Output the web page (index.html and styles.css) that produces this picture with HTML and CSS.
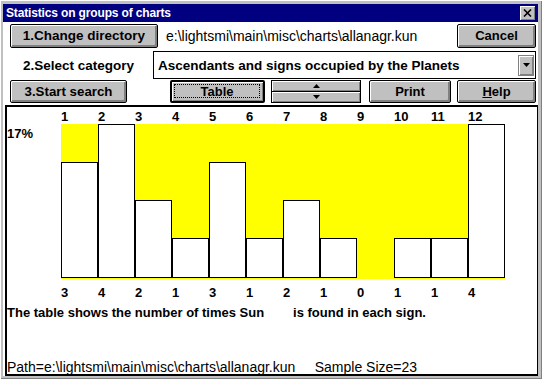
FILE: index.html
```html
<!DOCTYPE html>
<html lang="en">
  <head>
    <meta charset="UTF-8">
    <title>Statistics on groups of charts</title>
    <link rel="stylesheet" href="styles.css">
  </head>
  <body>
    <div class="window">
      <div class="titlebar">
        <span class="title">Statistics on groups of charts</span>
        <span class="close">
          <svg width="9" height="8" viewBox="0 0 9 8"><path d="M1 0.5 L8 7.5 M8 0.5 L1 7.5" stroke="#000" stroke-width="1.6" fill="none"/></svg>
        </span>
      </div>
      <div class="client">
        <div class="row row-dir">
          <button class="btn btn-dir">1.Change directory</button>
          <span class="dir-path">e:\lightsmi\main\misc\charts\allanagr.kun</span>
          <button class="btn btn-cancel">Cancel</button>
        </div>
        <div class="row row-cat">
          <span class="cat-label">2.Select category</span>
          <div class="combo">
            <span class="combo-text">Ascendants and signs occupied by the Planets</span>
            <span class="combo-arrow">
              <svg width="7" height="4" viewBox="0 0 7 4"><path d="M0 0 H7 L3.5 4 Z" fill="#000"/></svg>
            </span>
          </div>
        </div>
        <div class="row row-actions">
          <button class="btn btn-search">3.Start search</button>
          <button class="btn btn-table"><span class="focus">Table</span></button>
          <div class="spin">
            <span class="spin-btn"><svg width="7" height="4" viewBox="0 0 7 4"><path d="M0 4 H7 L3.5 0 Z" fill="#000"/></svg></span>
            <span class="spin-btn"><svg width="7" height="4" viewBox="0 0 7 4"><path d="M0 0 H7 L3.5 4 Z" fill="#000"/></svg></span>
          </div>
          <button class="btn btn-print">Print</button>
          <button class="btn btn-help"><u>H</u>elp</button>
        </div>
        <div class="panel">
          <div class="signs">
            <span>1</span><span>2</span><span>3</span><span>4</span><span>5</span><span>6</span>
            <span>7</span><span>8</span><span>9</span><span>10</span><span>11</span><span>12</span>
          </div>
          <div class="plot-row">
            <span class="pct">17%</span>
            <div class="plot">
              <div class="col"><div class="bar" style="height: 116px"></div></div>
              <div class="col"><div class="bar" style="height: 154px"></div></div>
              <div class="col"><div class="bar" style="height: 78px"></div></div>
              <div class="col"><div class="bar" style="height: 40px"></div></div>
              <div class="col"><div class="bar" style="height: 116px"></div></div>
              <div class="col"><div class="bar" style="height: 40px"></div></div>
              <div class="col"><div class="bar" style="height: 78px"></div></div>
              <div class="col"><div class="bar" style="height: 40px"></div></div>
              <div class="col"></div>
              <div class="col"><div class="bar" style="height: 40px"></div></div>
              <div class="col"><div class="bar" style="height: 40px"></div></div>
              <div class="col"><div class="bar" style="height: 154px"></div></div>
            </div>
          </div>
          <div class="counts">
            <span>3</span><span>4</span><span>2</span><span>1</span><span>3</span><span>1</span>
            <span>2</span><span>1</span><span>0</span><span>1</span><span>1</span><span>4</span>
          </div>
          <p class="caption">The table shows the number of times Sun        is found in each sign.</p>
          <p class="path">Path=e:\lightsmi\main\misc\charts\allanagr.kun     Sample Size=23</p>
        </div>
      </div>
    </div>
  </body>
</html>
```
FILE: styles.css
```css
body{
  margin: 0;
  font-family: "Liberation Sans", Arial, sans-serif;
  font-size: 13px;
  font-weight: bold;
  color: #000;
}
.window{
  width: 542px;
  height: 379px;
  box-sizing: border-box;
  background-color: #c0c0c0;
  padding: 4px 4px 3px 3px;
  display: flex;
  flex-direction: column;
  box-shadow: inset 1px 1px #fff, inset -1px -1px #808080;
}
.titlebar{
  height: 18px;
  flex: none;
  background-color: #000080;
  color: #fff;
  display: flex;
  align-items: center;
  justify-content: space-between;
  padding: 0 3px;
  font-size: 12px;
  letter-spacing: -0.15px;
}
.close{
  width: 15px;
  height: 14px;
  box-sizing: border-box;
  background-color: #c0c0c0;
  box-shadow: inset 1px 1px #fff, inset -1px -1px #808080;
  display: flex;
  align-items: center;
  justify-content: center;
}
.client{
  flex: 1;
  background-color: #fff;
  display: flex;
  flex-direction: column;
  min-height: 0;
}
.row{
  display: flex;
  align-items: center;
  flex: none;
}
.btn{
  font: inherit;
  color: #000;
  background-color: #c0c0c0;
  border: 1px solid #000;
  border-radius: 2px;
  box-shadow: inset 1px 1px #fff, inset -2px -2px #808080;
  padding: 0 0 1px 0;
  height: 100%;
  box-sizing: border-box;
  text-align: center;
}
.row-dir{
  margin-top: 2px;
  height: 24px;
}
.btn-dir{
  margin-left: 7px;
  width: 148px;
  font-size: 13.5px;
}
.dir-path{
  margin-left: 8px;
  font-size: 14px;
  font-weight: normal;
}
.btn-cancel{
  margin-left: auto;
  margin-right: 2px;
  width: 79px;
}
.row-cat{
  margin-top: 3px;
  height: 28px;
}
.cat-label{
  margin-left: 20px;
  font-size: 13.5px;
}
.combo{
  margin-left: auto;
  margin-right: 2px;
  width: 383px;
  height: 100%;
  box-sizing: border-box;
  border: 1px solid #000;
  display: flex;
  align-items: center;
  justify-content: space-between;
}
.combo-text{
  margin-left: 4px;
  font-size: 13.5px;
}
.combo-arrow{
  width: 16px;
  height: 21px;
  margin-right: 1px;
  box-sizing: border-box;
  background-color: #c0c0c0;
  border: 1px solid #808080;
  box-shadow: inset 1px 1px #fff, inset -1px -1px #808080;
  display: flex;
  align-items: center;
  justify-content: center;
}
.row-actions{
  margin-top: 1px;
  height: 23px;
}
.btn-search{
  margin-left: 7px;
  width: 117px;
  font-size: 13.3px;
}
.btn-table{
  margin-left: 43px;
  width: 95px;
  border-width: 2px;
  padding: 2px 3px 3px 2px;
  box-shadow: inset 1px 1px #fff, inset -1px -1px #808080;
}
.focus{
  display: block;
  height: 100%;
  box-sizing: border-box;
  border: 1px dotted #000;
  line-height: 13px;
}
.spin{
  margin-left: 6px;
  width: 90px;
  height: 100%;
  display: flex;
  flex-direction: column;
}
.spin-btn{
  flex: 1;
  box-sizing: border-box;
  background-color: #c0c0c0;
  border: 1px solid #000;
  box-shadow: inset 1px 1px #fff, inset -1px -1px #808080;
  display: flex;
  align-items: center;
  justify-content: center;
}
.spin-btn + .spin-btn{
  border-top: none;
}
.btn-print{
  margin-left: 8px;
  width: 82px;
}
.btn-help{
  margin-left: 6px;
  width: 79px;
}
.panel{
  flex: 1;
  margin: 2px 0 0 2px;
  border: 2px solid #000;
  border-right-width: 1px;
  display: flex;
  flex-direction: column;
  min-height: 0;
}
.signs,
.counts{
  display: flex;
  padding-left: 54px;
  line-height: 15px;
}
.signs span,
.counts span{
  width: 37px;
}
.signs{
  margin-top: 2px;
}
.plot-row{
  display: flex;
}
.pct{
  width: 54px;
  padding-top: 2px;
  line-height: 15px;
}
.plot{
  display: flex;
  align-items: flex-end;
  height: 155px;
  box-sizing: border-box;
  padding-bottom: 1px;
  background-color: #ffff00;
}
.col{
  width: 37px;
  display: flex;
  align-items: flex-end;
}
.bar{
  width: 100%;
  box-sizing: border-box;
  background-color: #fff;
  border: 1px solid #000;
}
.counts{
  margin-top: 6px;
}
.caption{
  margin: 5px 0 0 0;
  line-height: 15px;
  white-space: pre;
}
.path{
  margin: 39px 0 0 0;
  font-size: 14px;
  font-weight: normal;
  line-height: 16px;
  white-space: pre;
}
```
